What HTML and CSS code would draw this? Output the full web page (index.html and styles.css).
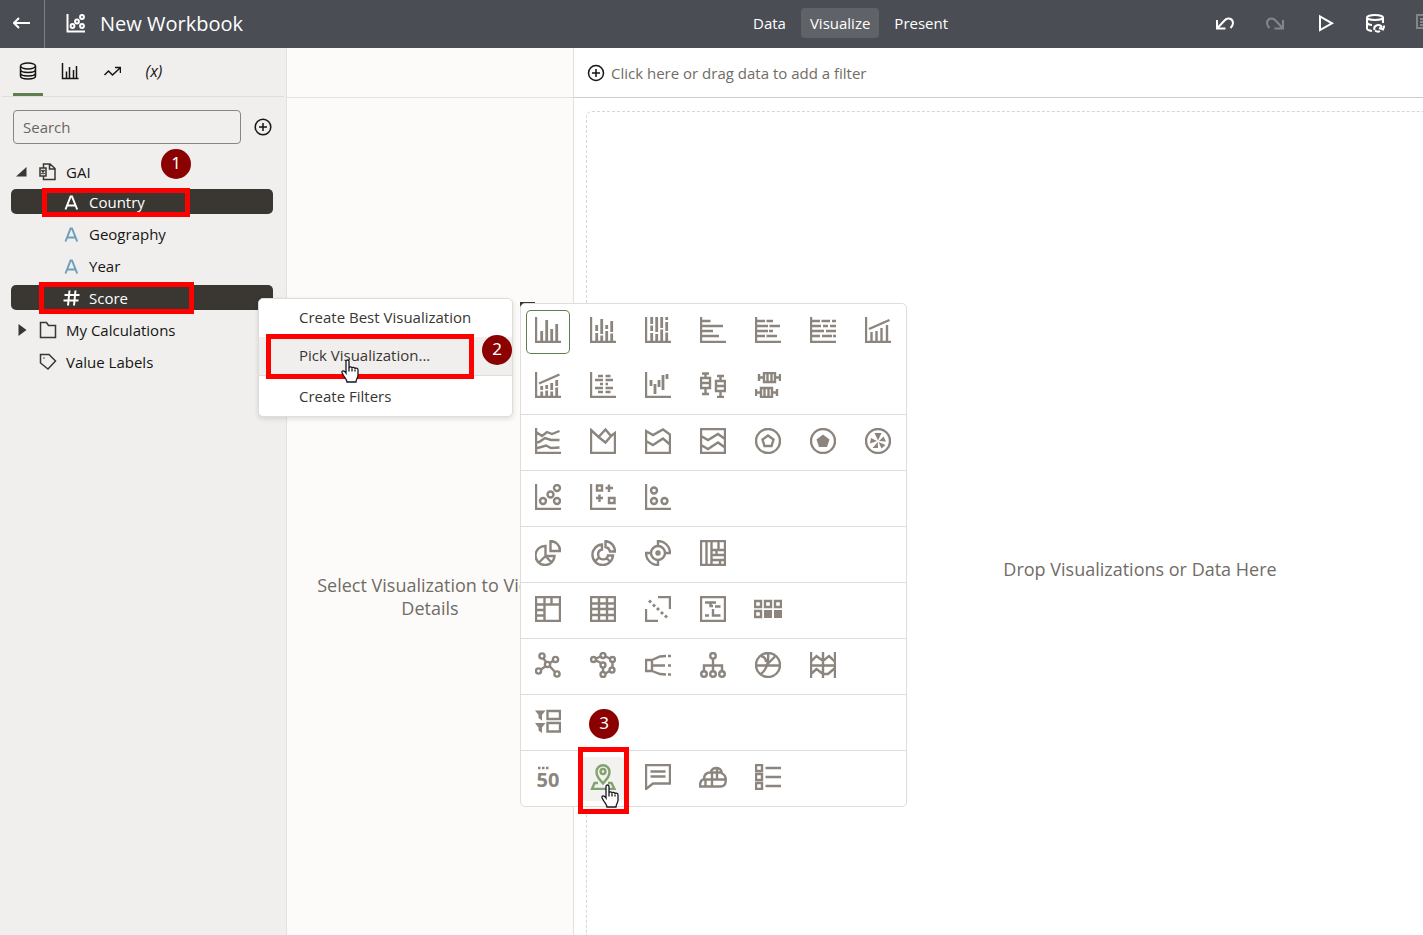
FILE: index.html
```html
<!DOCTYPE html>
<html lang="en">
<head>
<meta charset="utf-8">
<meta name="viewport" content="width=device-width, initial-scale=1">
<title>New Workbook</title>
<link rel="stylesheet" href="styles.css">
</head>
<body>
<div class="app">
  <header class="topbar">
    <div class="topbar-left">
      <button class="back" type="button" aria-label="Back"><svg width="18" height="14" viewBox="0 0 18 14"><path d="M17 6H1M6 1L1 6l5 5"/></svg></button>
      <svg class="logo" width="20" height="20" viewBox="0 0 20 20"><path d="M1.500 0v17.500H19"/><circle cx="6.500" cy="12" r="1.900"/><circle cx="11" cy="7.500" r="1.900"/><circle cx="16" cy="3" r="1.900"/><circle cx="16" cy="12" r="1.900"/></svg>
      <h1 class="title">New Workbook</h1>
    </div>
    <nav class="modes">
      <button type="button">Data</button>
      <button type="button" class="active">Visualize</button>
      <button type="button">Present</button>
    </nav>
    <div class="actions">
      <button type="button" aria-label="Undo"><svg width="20" height="20" viewBox="0 0 20 20"><path d="M2 6v8.500h8.500M2 14.500L9.500 6.500C13 2.500 18 5 18 9c0 2-1 3.500-2.500 5"/></svg></button>
      <button type="button" aria-label="Redo" class="dim"><svg width="20" height="20" viewBox="0 0 20 20"><path d="M18 6v8.500H9.500M18 14.500L10.500 6.500C7 2.500 2 5 2 9c0 2 1 3.500 2.500 5"/></svg></button>
      <button type="button" aria-label="Preview"><svg width="20" height="20" viewBox="0 0 20 20"><path d="M5 2.500v13.500l12-6.700z"/></svg></button>
      <button type="button" aria-label="Refresh data"><svg width="20" height="20" viewBox="0 0 20 20"><ellipse cx="10" cy="3.500" rx="8" ry="2.500"/><path d="M2 3.500v11c0 1 2 2 5 2.400M18 3.500V9M2 9c1 1.200 3 2 5 2M9.500 16c-1.500-5 5.500-7 7.500-2.500M19.500 11.500l-1.500 4-4-1.500M10 16.500c2 1.500 3.500 1.500 5 .5"/></svg></button>
      <button type="button" aria-label="Notes" class="dim"><svg width="20" height="20" viewBox="0 0 20 20"><path d="M2 1h16v13H2zM5 5h10M5 8h10M5 11h6"/></svg></button>
    </div>
  </header>

  <div class="workspace">
    <aside class="sidebar">
      <div class="tabs">
        <button type="button" class="active" aria-label="Data"><svg width="18" height="18" viewBox="0 0 18 18"><ellipse cx="9" cy="4" rx="7.500" ry="3"/><path d="M1.500 4v10c0 4 15 4 15 0V4M1.500 7.500c0 4 15 4 15 0M1.500 11c0 4 15 4 15 0"/></svg></button>
        <button type="button" aria-label="Visualizations"><svg width="18" height="18" viewBox="0 0 18 18"><path d="M1.500 1v15.500H17.500M5.500 9.500V16M8.500 5v11M12.500 8v8M15.500 4v12"/></svg></button>
        <button type="button" aria-label="Analytics"><svg width="18" height="18" viewBox="0 0 18 18"><path d="M1.500 13l4-4 4 4L17 6M12 5.500h5.500v5.500"/></svg></button>
        <button type="button" class="fx" aria-label="Parameters">(x)</button>
      </div>
      <div class="search">
        <input type="search" placeholder="Search" aria-label="Search">
        <button type="button" aria-label="Add data"><svg width="18" height="18" viewBox="0 0 18 18"><circle cx="9" cy="9" r="7.800"/><path d="M9 5v8M5 9h8"/></svg></button>
      </div>
      <ul class="tree">
        <li class="node first"><svg class="arrow" width="12" height="12" viewBox="0 0 12 12"><path d="M10.500 1v9.500H0z"/></svg><svg class="kind" width="18" height="18" viewBox="0 0 18 18"><path d="M4.500 4.500V1H11l5 4.500V16.500H4.500v-3M10.500 1v5H16M1 5h6v8H1zM2.500 7l3 4M5.500 7l-3 4"/></svg><span>GAI</span></li>
        <li class="leaf selected"><svg class="type" width="14" height="16" viewBox="0 0 14 16"><path d="M1.500 15.500L6.600 2.500h1.400L13.200 15.500M3 11.500h8.500"/></svg><span>Country</span></li>
        <li class="leaf"><svg class="type" width="14" height="16" viewBox="0 0 14 16"><path d="M1.500 15.500L6.600 2.500h1.400L13.200 15.500M3 11.500h8.500"/></svg><span>Geography</span></li>
        <li class="leaf"><svg class="type" width="14" height="16" viewBox="0 0 14 16"><path d="M1.500 15.500L6.600 2.500h1.400L13.200 15.500M3 11.500h8.500"/></svg><span>Year</span></li>
        <li class="leaf selected"><svg class="type" width="14" height="16" viewBox="0 0 14 16"><path d="M.5 5h15M-.5 10.500h15M5.500 .5L4 15.500M11.500 .5L10 15.500"/></svg><span>Score</span></li>
        <li class="node"><svg class="arrow" width="12" height="12" viewBox="0 0 12 12"><path d="M2.500 0v12l8-6z"/></svg><svg class="kind" width="18" height="18" viewBox="0 0 18 18"><path d="M1.500 16.500V1.500h6l2 3h7v12z"/></svg><span>My Calculations</span></li>
        <li class="node"><i class="arrow"></i><svg class="kind" width="18" height="18" viewBox="0 0 18 18"><path d="M1.500 1.500h8.500L16.500 8 9 16 1.500 10zM4.500 5h1"/></svg><span>Value Labels</span></li>
      </ul>
    </aside>

    <section class="grammar">
      <div class="strip"></div>
      <p class="hint">Select Visualization to View Details</p>
    </section>

    <main class="canvas">
      <button class="filter" type="button"><svg width="18" height="18" viewBox="0 0 18 18"><circle cx="9" cy="9" r="7.500"/><path d="M9 5v8M5 9h8"/></svg>Click here or drag data to add a filter</button>
      <div class="drop"><p>Drop Visualizations or Data Here</p></div>
    </main>
  </div>

  <div class="peek"></div>
  <div class="context" role="menu">
    <button type="button" role="menuitem">Create Best Visualization</button>
    <button type="button" role="menuitem" class="hover">Pick Visualization...</button>
    <hr>
    <button type="button" role="menuitem">Create Filters</button>
  </div>

  <div class="picker">
    <div class="group">
      <button type="button" class="current" aria-label="Bar"><svg viewBox="0 0 26 26"><path d="M1 0v25h25"/><path class="w" d="M6.700 14v10M11.700 3v21M16.700 12v12M21.700 7v17"/></svg></button>
      <button type="button" aria-label="Stacked bar"><svg viewBox="0 0 26 26"><path d="M1 0v25h25"/><path class="w" d="M6.700 8v6M6.700 16v8M11.700 2v15M11.700 18.500V24M16.700 8v4M16.700 14v10M21.700 4v11M21.700 16.500V24"/></svg></button>
      <button type="button" aria-label="100% stacked bar"><svg viewBox="0 0 26 26"><path d="M1 0v25h25"/><path class="w" d="M6.700 0v7M6.700 8.500V14M6.700 16v8M11.700 0v15M11.700 17v7M16.700 0v11M16.700 12.500V24M21.700 0v3M21.700 5v9M21.700 15.500V24"/></svg></button>
      <button type="button" aria-label="Horizontal bar"><svg viewBox="0 0 26 26"><path d="M1 0v25h25M2 4h8.500M2 9h21M2 14h11M2 19h17"/></svg></button>
      <button type="button" aria-label="Horizontal stacked"><svg viewBox="0 0 26 26"><path d="M1 0v25h25M2 4h8M11.500 4H18M2 9h11M14.500 9H25M2 14h11M14 14h4M2 19h8M11.500 19H22"/></svg></button>
      <button type="button" aria-label="Horizontal 100% stacked"><svg viewBox="0 0 26 26"><path d="M1 0v25h25M2 4h8M11.500 4H20M22 4h4M2 9h9M13 9h5M20 9h6M2 14h12M16 14h10M2 19h8M12 19h10M23 19h3"/></svg></button>
      <button type="button" aria-label="Combo"><svg viewBox="0 0 26 26"><path d="M1 0v25h25M4 12l20.500-9M6.500 15v9M11.500 14v10M16.500 11v13M22 8v16"/></svg></button>
      <button type="button" aria-label="Stacked combo"><svg viewBox="0 0 26 26"><path d="M1 0v25h25M4 11.500L24.500 2.500"/><path class="w" d="M6.700 14v4M6.700 19.500V24M11.700 13v4M11.700 18.500V24M16.700 11v7M16.700 19.500V24M21.700 8v6M21.700 15.500V24"/></svg></button>
      <button type="button" aria-label="Butterfly"><svg viewBox="0 0 26 26"><path d="M1 0v25h25M8 4h5M15.500 4H20.500M5 8h8M15.500 8H23M10 12h3M15.500 12H18M5 16h8M15.500 16H23M8 20h5M15.500 20H20.500"/></svg></button>
      <button type="button" aria-label="Waterfall"><svg viewBox="0 0 26 26"><path d="M1 0v25h25"/><path class="w" d="M6 8v6M10 12v10M14 8v7M18 3v15M22 2v5"/></svg></button>
      <button type="button" aria-label="Boxplot"><svg viewBox="0 0 26 26"><path d="M1 6h9v10H1zM1 11h9M2 1.500h7M2 22h7M5.500 1v5M5.500 16v6M16 9h9v10h-9zM16 14h9M17 4h7M17 25h7M20.500 4v5M20.500 19v6"/></svg></button>
      <button type="button" aria-label="Horizontal boxplot"><svg viewBox="0 0 26 26"><path d="M9 1h11v9H9zM12.500 1v9M16.500 1v9M4 2v7M25 2v7M4 5.500h5M20 5.500h5M6 16h11v9H6zM9.500 16v9M13.500 16v9M1 17v7M22 17v7M1 20.500h5M17 20.500h5"/></svg></button>
    </div>
    <div class="group">
      <button type="button" aria-label="Line"><svg viewBox="0 0 26 26"><path d="M1 0v25h25M1 4l6 4 5-4 5 2 7.500-3M1 14.500l3-.5 6-4 6 2h8.500M1 20.500l10-3 5 2.500 8.500-.5"/></svg></button>
      <button type="button" aria-label="Area"><svg viewBox="0 0 26 26"><path d="M1 2l7.500 7L15.500 1.500 21 8l4-3v20H1zM8.500 9l7 5.500L21 8"/></svg></button>
      <button type="button" aria-label="Stacked area"><svg viewBox="0 0 26 26"><path d="M1 3l7 4 10-5.500 7 5V25H1zM1 13l7 4 10-6.500 7 6"/></svg></button>
      <button type="button" aria-label="100% stacked area"><svg viewBox="0 0 26 26"><path d="M1 1h24v24H1zM1 8l7 4 10-6 7 5M1 17l7 4 10-6.500 7 5"/></svg></button>
      <button type="button" aria-label="Radar line"><svg viewBox="0 0 26 26"><circle cx="13" cy="13" r="12"/><path d="M13 7.500l5.500 4-2 6.500h-7l-2-6.500z"/></svg></button>
      <button type="button" aria-label="Radar area"><svg viewBox="0 0 26 26"><circle cx="13" cy="13" r="12"/><path class="f" d="M13 6.500l6.500 5L17 19H9l-2.500-7.500z"/></svg></button>
      <button type="button" aria-label="Radar bar"><svg viewBox="0 0 26 26"><circle cx="13" cy="13" r="12"/><path class="f" d="M13 12.500L9.500 5h7zM14 13l4.500-4.500 2.500 5zM13.500 14l7 3-4 3.500zM12.800 14l.2 6H7.500zM12 13l-7 2.500 1-5.500z"/></svg></button>
    </div>
    <div class="group">
      <button type="button" aria-label="Scatter"><svg viewBox="0 0 26 26"><path d="M1 0v25h25"/><circle cx="8" cy="17" r="3"/><circle cx="15.500" cy="10.500" r="3"/><circle cx="22" cy="4" r="3"/><circle cx="22" cy="17" r="3"/></svg></button>
      <button type="button" aria-label="Category scatter"><svg viewBox="0 0 26 26"><path d="M1 0v25h25M7 1.500h5v5H7zM19 14h5.500v5H19zM19 .5v7.500M15.500 4h7.500M9.500 10.500V18M6 14h7"/></svg></button>
      <button type="button" aria-label="Bubble"><svg viewBox="0 0 26 26"><path d="M1 0v25h25"/><circle cx="9" cy="6.500" r="3"/><circle cx="9" cy="17" r="3"/><circle cx="19.500" cy="17" r="3"/></svg></button>
    </div>
    <div class="group">
      <button type="button" aria-label="Pie"><svg viewBox="0 0 26 26"><path d="M10.500 6a9.500 9.500 0 1 0 9 10H10.500zM10.500 16L4 22.500M10.500 16l6 6.500M15.500 1v10H25A9.700 9.700 0 0 0 15.500 1z"/></svg></button>
      <button type="button" aria-label="Donut"><svg viewBox="0 0 26 26"><path d="M12 4.500a10.300 10.300 0 1 0 11 11h-5a5 5 0 1 1-6-6zM15.500 1v6a6 6 0 0 1 4.500 4.500h5A10.500 10.500 0 0 0 15.500 1zM5 21.500l4-4M20 21.500l-4-4"/></svg></button>
      <button type="button" aria-label="Sunburst"><svg viewBox="0 0 26 26"><circle cx="13" cy="13" r="7"/><circle cx="13" cy="13" r="1.500"/><path d="M13 6V1a12 12 0 0 1 12 12h-5M13 20v5A12 12 0 0 1 1 13h5"/></svg></button>
      <button type="button" aria-label="Treemap"><svg viewBox="0 0 26 26"><path d="M1 1h24v24H1zM6.500 1v24M11.500 1v24M11.500 10h13M11.500 15h13M11.500 20h13M18.500 1v9M16.500 10v5M20 20v5"/></svg></button>
    </div>
    <div class="group">
      <button type="button" aria-label="Pivot"><svg viewBox="0 0 26 26"><path d="M1 1h24v24H1zM9.500 1v24M1 8.500h24M16.500 1v7.500M1 14h8.500M1 19.500h8.500"/></svg></button>
      <button type="button" aria-label="Table"><svg viewBox="0 0 26 26"><path d="M1 1h24v24H1zM1 7.500h24M1 13h24M1 19h24M9 1v24M17 1v24"/></svg></button>
      <button type="button" aria-label="Correlation matrix"><svg viewBox="0 0 26 26"><path d="M13 1h12v12M1 13v12h12"/><path class="f" d="M5 3.500l2 2-2 2-2-2zM9 7.500l2 2-2 2-2-2zM13 11l2 2-2 2-2-2zM17 15l2 2-2 2-2-2zM21 18.500l2 2-2 2-2-2z"/></svg></button>
      <button type="button" aria-label="Heat map"><svg viewBox="0 0 26 26"><path d="M1 1h24v24H1zM5 6.500h11M10.500 6v4H13M15 10.500h5.500M13 13v6.500h7.500M5 19.500h4"/></svg></button>
      <button type="button" aria-label="Tiles"><svg viewBox="0 0 28 26" class="wide"><path d="M1 5h6v6H1zM11 5h6v6h-6zM21 5h6v6h-6zM1 15h6v6H1z"/><path class="f" d="M10 14h8v8h-8zM20 14h8v8h-8z"/></svg></button>
    </div>
    <div class="group">
      <button type="button" aria-label="Network"><svg viewBox="0 0 26 26"><circle cx="7" cy="4" r="2.600"/><circle cx="20.500" cy="7.500" r="2.600"/><circle cx="12.500" cy="12.500" r="2.600"/><circle cx="3.500" cy="19" r="2.600"/><circle cx="22" cy="22" r="2.600"/><path d="M8 6l3.500 4.500M18.500 8.500l-3.500 2.500M6 17.500l5-3.500M15 14.500l5 5.500"/></svg></button>
      <button type="button" aria-label="Path network"><svg viewBox="0 0 26 26"><circle cx="3.500" cy="7.500" r="2.500"/><circle cx="13" cy="3.500" r="2.500"/><circle cx="22.500" cy="7.500" r="2.500"/><circle cx="13" cy="13" r="2.500"/><circle cx="22" cy="18" r="2.500"/><circle cx="13" cy="22.500" r="2.500"/><path d="M6 6.500l4.500-2M15.500 4.500l4.500 2M22.500 10v5.500M13 15.500V20M15.500 21.500l4-2.500M6 8.500l5 2.500"/></svg></button>
      <button type="button" aria-label="Sankey"><svg viewBox="0 0 26 26"><path d="M1 8h6v11H1zM7 8l8-3.500L21 4M7 13.500h13M7 19l8 3 6 .5M23 4h3M23 13.500h3M23 22.500h3"/></svg></button>
      <button type="button" aria-label="Tree diagram"><svg viewBox="0 0 26 26"><circle cx="13" cy="3.800" r="2.800"/><circle cx="4" cy="22" r="2.800"/><circle cx="13" cy="22" r="2.800"/><circle cx="22" cy="22" r="2.800"/><path d="M13 6.500V19M4 19v-5.500h18V19"/></svg></button>
      <button type="button" aria-label="Chord"><svg viewBox="0 0 26 26"><circle cx="13" cy="13" r="12"/><path d="M1 13.500h24M6 4c4 1 5 4 5 6M13 1c1 10-2 17-7 21M20 4.500L10.500 14"/></svg></button>
      <button type="button" aria-label="Parallel coordinates"><svg viewBox="0 0 26 26"><path d="M1 0v26M13 0v26M25 0v26M1 13.500h24M1 9.500L6.500 4 13 9l6-5 6 5.500M1 22l5.500-5 6.500 5h5l7-6"/></svg></button>
    </div>
    <div class="group">
      <button type="button" aria-label="Dashboard filters"><svg viewBox="0 0 26 26"><path class="f" d="M0 2.500h10.500L7 7v5.500L3.500 10V7zM0 15h10.500L7 19.500V25l-3.500-2.500v-3z"/><path d="M12.500 3H25v8H12.500zM12.500 15H25v8.500H12.500z"/></svg></button>
    </div>
    <div class="group">
      <button type="button" class="tile" aria-label="Performance tile"><svg viewBox="0 0 26 26"><path d="M3 4h2.500M7 4h2.500M11 4h2.500"/></svg><span>50</span></button>
      <button type="button" class="map" aria-label="Map"><svg viewBox="0 0 26 26"><path d="M13 19.500C8 13.500 6.500 11.500 6.500 7.800a6.500 6.500 0 0 1 13 0c0 3.700-1.500 5.700-6.500 11.700z"/><circle cx="13" cy="7.500" r="2.500"/><path d="M8 19H4.500L2 25h22.500L21.500 19H18"/></svg></button>
      <button type="button" aria-label="Text box"><svg viewBox="0 0 26 26"><path d="M1 1h24v18.500H8L1 25zM5.500 7.500h15M5.500 12.500h15"/></svg></button>
      <button type="button" aria-label="Parallel plot"><svg viewBox="0 0 28 26" class="wide"><path d="M1 22.500c0-5 2-7 4-7 0-5 3-7 6.500-7 1-3 3-4.500 6-4.500s5 2 5.500 5.500c5 2 5.500 13-1.500 13zM5 15.500h21M11.500 8.500H23M6.500 22v-6.500M13 22.500v-14M18 4v11.500"/></svg></button>
      <button type="button" aria-label="List"><svg viewBox="0 0 26 26"><path d="M1 1h6v6H1zM1 10h6v6H1zM1 19h6v6H1zM10.500 4H26M10.500 13H26M10.500 22H26"/></svg></button>
    </div>
  </div>

  <div class="frame frame-country"></div>
  <div class="frame frame-score"></div>
  <div class="frame frame-pick"></div>
  <div class="frame frame-map"></div>
  <div class="step step-one">1</div>
  <div class="step step-two">2</div>
  <div class="step step-three">3</div>
  <svg class="hand hand-menu" width="18" height="24" viewBox="0 0 18 24"><path d="M5 14V2.500C5 .5 8 .5 8 2.500V9c0-1.600 3-1.600 3 .3 0-1.500 3-1.300 3 .6 0-1.300 3-1.200 3 .8V16c0 3-2 4-2 7H6c0-3-3.500-5-5-9.500C.5 11.500 3 11 5 14zM8 9v3.500M11 9.500v3M14 10.500v2"/></svg>
  <svg class="hand hand-map" width="18" height="24" viewBox="0 0 18 24"><path d="M5 14V2.500C5 .5 8 .5 8 2.500V9c0-1.600 3-1.600 3 .3 0-1.500 3-1.300 3 .6 0-1.300 3-1.200 3 .8V16c0 3-2 4-2 7H6c0-3-3.500-5-5-9.500C.5 11.500 3 11 5 14zM8 9v3.500M11 9.500v3M14 10.500v2"/></svg>
</div>
</body>
</html>
```
FILE: styles.css
```css
* { box-sizing: border-box; }
body {
  margin: 0;
  font-family: "Open Sans", "Noto Sans", sans-serif;
  font-size: 15px;
  line-height: 20px;
  color: #161513;
}
button {
  font: inherit;
  color: inherit;
  background: none;
  border: 0;
  padding: 0;
}
svg { fill: none; stroke: currentColor; flex: none; }
p, h1, ul { margin: 0; padding: 0; }

.app {
  position: relative;
  display: flex;
  flex-direction: column;
  min-height: 100vh;
  overflow: hidden;
}

/* Top bar */
.topbar {
  display: flex;
  align-items: center;
  height: 48px;
  background: #4a4d53;
  color: #fff;
}
.topbar svg { stroke-width: 2; }
.topbar-left { display: flex; align-items: center; width: 744px; height: 100%; }
.back {
  display: flex;
  align-items: center;
  justify-content: center;
  width: 45px;
  height: 100%;
  border-right: 1px solid #7d7f83;
}
.logo { margin: 0 14px 0 21px; }
.title { font-size: 20px; line-height: 28px; font-weight: 500; }
.modes { display: flex; gap: 6px; padding-bottom: 2px; font-weight: 500; }
.modes button { height: 30px; padding: 0 9px; border-radius: 4px; }
.modes .active { background: #5f6267; }
.actions { display: flex; margin: 0 -27px 0 auto; }
.actions button { display: flex; justify-content: center; width: 50px; }
.actions .dim { color: #84868a; }

/* Columns */
.workspace { display: grid; grid-template-columns: 287px 287px 1fr; flex: 1; }
.sidebar { background: #f0efed; border-right: 1px solid #e3e1de; }
.tabs {
  display: flex;
  gap: 12px;
  height: 49px;
  margin: 0 2px;
  padding: 0 11px;
  border-bottom: 1px solid #e0deda;
}
.tabs button {
  display: flex;
  align-items: center;
  justify-content: center;
  width: 30px;
  border-bottom: 3px solid transparent;
}
.tabs svg { stroke-width: 1.5; }
.tabs .active { border-color: #5f7d4f; }
.tabs .fx { font-style: italic; font-size: 16px; }
.search { display: flex; align-items: center; gap: 13px; padding: 13px 14px 15px 13px; }
.search input {
  flex: 1;
  min-width: 0;
  height: 34px;
  padding: 0 9px;
  border: 1px solid #8b8580;
  border-radius: 4px;
  background: transparent;
  font: inherit;
}
.search input::placeholder { color: #6b6661; opacity: 1; }
.search button { display: flex; }
.search svg { stroke-width: 1.5; }

.tree { display: flex; flex-direction: column; gap: 7px; padding: 0 13px 0 11px; list-style: none; }
.tree li { display: flex; align-items: center; height: 25px; border-radius: 5px; }
.tree .first { margin-bottom: -2px; }
.arrow { width: 12px; margin-left: 5px; fill: #3a3631; stroke: none; }
.kind { margin: 0 9px 0 11px; color: #3a3631; stroke-width: 1.5; }
.leaf { padding-left: 53px; }
.type { margin-right: 11px; color: #6f9fba; stroke-width: 2; overflow: visible; }
.selected { background: #3a3631; color: #fff; font-weight: 500; }
.selected .type { color: #fff; }

.grammar {
  display: flex;
  flex-direction: column;
  background: #fcfbf9;
  border-right: 1px solid #e3e1de;
}
.strip { height: 50px; border-bottom: 1px solid #e3e1de; }
.hint, .drop p { font-size: 18px; line-height: 23px; color: #716c66; text-align: center; }
.hint {
  display: flex;
  flex: 1;
  align-items: center;
  justify-content: center;
  padding: 160px 20px 0;
}
.canvas { display: flex; flex-direction: column; min-width: 0; background: #fff; }
.filter {
  display: flex;
  align-items: center;
  gap: 6px;
  height: 50px;
  padding-left: 13px;
  border-bottom: 1px solid #ccc;
  color: #716c66;
}
.filter svg { color: #161513; stroke-width: 1.5; }
.drop {
  display: flex;
  flex: 1;
  align-items: center;
  justify-content: center;
  margin: 13px 0 0 12px;
  padding: 92px 0 0 270px;
  border: 1px dashed #d9d7d4;
  border-width: 1px 0 0 1px;
  border-radius: 6px 0 0 0;
}

/* Context menu */
.context {
  position: absolute;
  left: 258px;
  top: 298px;
  width: 255px;
  background: #fff;
  border: 1px solid #dfddda;
  border-radius: 5px;
  box-shadow: 0 2px 5px rgba(0, 0, 0, 0.12);
  color: #3a3631;
}
.context button { display: block; width: 100%; height: 38px; padding: 0 0 2px 40px; text-align: left; }
.context .hover { background: #f0efed; }
.context hr { margin: 0 0 2px; border: 0; border-top: 1px solid #e0deda; }

/* Visualization picker */
.peek { position: absolute; left: 520px; top: 302px; width: 15px; height: 6px; background: #3a3631; }
.picker {
  position: absolute;
  left: 520px;
  top: 303px;
  width: 387px;
  background: #fff;
  border: 1px solid #e0deda;
  border-radius: 5px;
  color: #8b857e;
}
.group {
  display: grid;
  grid-template-columns: repeat(7, 44px);
  gap: 11px;
  padding: 6px 5px 5px;
}
.group + .group { border-top: 1px solid #e0deda; }
.group button {
  position: relative;
  display: flex;
  align-items: center;
  justify-content: center;
  height: 44px;
  padding-bottom: 4px;
  border-radius: 5px;
}
.group svg { width: 26px; height: 26px; stroke-width: 2.4; }
.group .wide { width: 28px; }
.group .w { stroke-width: 2.8; }
.group .f { fill: currentColor; stroke: none; }
.group .current { box-shadow: inset 0 0 0 1px #5f7d4f; }
.tile span {
  position: absolute;
  top: 12px;
  font-size: 20px;
  line-height: 22px;
  font-weight: 700;
}
.group .map { background: #f3f2f0; color: #81a36d; }

/* Step annotations */
.frame { position: absolute; border: 5px solid #f00; }
.frame-country { left: 42px; top: 188px; width: 148px; height: 29px; }
.frame-score { left: 39px; top: 282px; width: 155px; height: 32px; }
.frame-pick { left: 266px; top: 334px; width: 208px; height: 45px; }
.frame-map { left: 578px; top: 747px; width: 51px; height: 67px; }
.step {
  position: absolute;
  width: 30px;
  height: 30px;
  border-radius: 50%;
  background: #8b0000;
  color: #fff;
  font-family: "Noto Sans", sans-serif;
  font-size: 17px;
  line-height: 28px;
  text-align: center;
}
.step-one { left: 161px; top: 149px; }
.step-two { left: 482px; top: 335px; }
.step-three { left: 589px; top: 709px; }
.hand { position: absolute; fill: #fff; stroke: #161520; stroke-width: 1.3; }
.hand-menu { left: 341px; top: 359px; }
.hand-map { left: 601px; top: 784px; }
```
